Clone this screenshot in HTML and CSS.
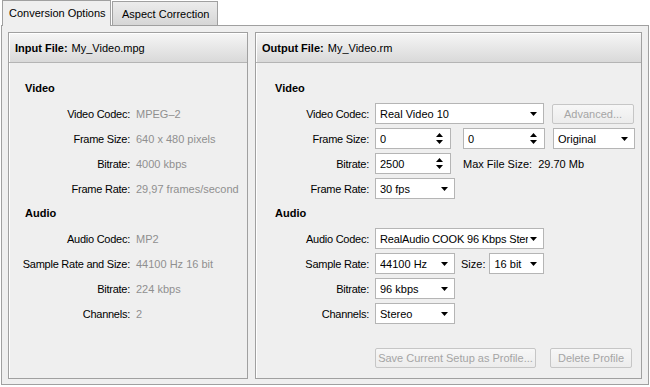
FILE: index.html
```html
<!DOCTYPE html>
<html lang="en">
<head>
    <meta charset="UTF-8">
    <title>Conversion Options</title>
    <link rel="stylesheet" href="styles.css">
</head>
<body>
    <div class="window">
        <div class="tabs">
            <div class="tab tab-active">Conversion Options</div>
            <div class="tab">Aspect Correction</div>
        </div>

        <div class="tab-body">
            <!-- Input file: read-only info -->
            <div class="panel panel-input">
                <div class="panel-header"><b>Input File:</b> My_Video.mpg</div>
                <div class="panel-body">
                    <div class="section-title">Video</div>
                    <div class="row"><span class="label">Video Codec:</span><span class="value">MPEG&#8211;2</span></div>
                    <div class="row"><span class="label">Frame Size:</span><span class="value">640 x 480 pixels</span></div>
                    <div class="row"><span class="label">Bitrate:</span><span class="value">4000 kbps</span></div>
                    <div class="row"><span class="label">Frame Rate:</span><span class="value">29,97 frames/second</span></div>

                    <div class="section-title">Audio</div>
                    <div class="row"><span class="label">Audio Codec:</span><span class="value">MP2</span></div>
                    <div class="row"><span class="label">Sample Rate and Size:</span><span class="value">44100 Hz 16 bit</span></div>
                    <div class="row"><span class="label">Bitrate:</span><span class="value">224 kbps</span></div>
                    <div class="row"><span class="label">Channels:</span><span class="value">2</span></div>
                </div>
            </div>

            <!-- Output file: editable settings -->
            <div class="panel panel-output">
                <div class="panel-header"><b>Output File:</b> My_Video.rm</div>
                <div class="panel-body">
                    <div class="section-title">Video</div>
                    <div class="row">
                        <span class="label">Video Codec:</span>
                        <div class="select w-wide"><span class="select-text">Real Video 10</span><svg class="arrow" width="7" height="4" viewBox="0 0 7 4"><polygon points="0,0 7,0 3.5,4" fill="#000"/></svg></div>
                        <button class="btn w-btn" disabled>Advanced...</button>
                    </div>
                    <div class="row">
                        <span class="label">Frame Size:</span>
                        <div class="spin w-spin"><span class="select-text">0</span><svg class="spin-arrows" width="7" height="11" viewBox="0 0 7 11"><polygon points="3.5,0 7,4 0,4" fill="#000"/><polygon points="0,7 7,7 3.5,11" fill="#000"/></svg></div>
                        <div class="spin w-spin2"><span class="select-text">0</span><svg class="spin-arrows" width="7" height="11" viewBox="0 0 7 11"><polygon points="3.5,0 7,4 0,4" fill="#000"/><polygon points="0,7 7,7 3.5,11" fill="#000"/></svg></div>
                        <div class="select w-btn"><span class="select-text">Original</span><svg class="arrow" width="7" height="4" viewBox="0 0 7 4"><polygon points="0,0 7,0 3.5,4" fill="#000"/></svg></div>
                    </div>
                    <div class="row">
                        <span class="label">Bitrate:</span>
                        <div class="spin w-spin"><span class="select-text">2500</span><svg class="spin-arrows" width="7" height="11" viewBox="0 0 7 11"><polygon points="3.5,0 7,4 0,4" fill="#000"/><polygon points="0,7 7,7 3.5,11" fill="#000"/></svg></div>
                        <span class="note">Max File Size:&nbsp; 29.70 Mb</span>
                    </div>
                    <div class="row">
                        <span class="label">Frame Rate:</span>
                        <div class="select w-small"><span class="select-text">30 fps</span><svg class="arrow" width="7" height="4" viewBox="0 0 7 4"><polygon points="0,0 7,0 3.5,4" fill="#000"/></svg></div>
                    </div>

                    <div class="section-title">Audio</div>
                    <div class="row">
                        <span class="label">Audio Codec:</span>
                        <div class="select w-wide"><span class="select-text select-clip">RealAudio COOK 96 Kbps Stereo</span><svg class="arrow" width="7" height="4" viewBox="0 0 7 4"><polygon points="0,0 7,0 3.5,4" fill="#000"/></svg></div>
                    </div>
                    <div class="row">
                        <span class="label">Sample Rate:</span>
                        <div class="select w-small"><span class="select-text">44100 Hz</span><svg class="arrow" width="7" height="4" viewBox="0 0 7 4"><polygon points="0,0 7,0 3.5,4" fill="#000"/></svg></div>
                        <span class="note note-size">Size:</span>
                        <div class="select w-bits"><span class="select-text">16 bit</span><svg class="arrow" width="7" height="4" viewBox="0 0 7 4"><polygon points="0,0 7,0 3.5,4" fill="#000"/></svg></div>
                    </div>
                    <div class="row">
                        <span class="label">Bitrate:</span>
                        <div class="select w-small"><span class="select-text">96 kbps</span><svg class="arrow" width="7" height="4" viewBox="0 0 7 4"><polygon points="0,0 7,0 3.5,4" fill="#000"/></svg></div>
                    </div>
                    <div class="row">
                        <span class="label">Channels:</span>
                        <div class="select w-small"><span class="select-text">Stereo</span><svg class="arrow" width="7" height="4" viewBox="0 0 7 4"><polygon points="0,0 7,0 3.5,4" fill="#000"/></svg></div>
                    </div>

                    <div class="profile-buttons">
                        <button class="btn w-save" disabled>Save Current Setup as Profile...</button>
                        <button class="btn w-btn" disabled>Delete Profile</button>
                    </div>
                </div>
            </div>
        </div>
    </div>
</body>
</html>
```

FILE: styles.css
```css
:root {
    --face: #efefef;
    --frame: #a0a0a0;
    --field-border: #b5b5b5;
    --muted: #8f8f8f;
    --disabled: #a5a5a5;
}

* {
    box-sizing: border-box;
    margin: 0;
    padding: 0;
}

body {
    font-family: "Liberation Sans", Arial, sans-serif;
    font-size: 11px;
    color: #000;
    background-color: #fff;
}

.window {
    width: 650px;
    height: 387px;
    padding: 0 1px;
}

/* Tabs */

.tabs {
    display: flex;
    align-items: flex-end;
    height: 25px;
}

.tab {
    height: 24px;
    width: 106px;
    margin-left: 1px;
    padding-left: 9px;
    display: flex;
    align-items: center;
    border: 1px solid var(--frame);
    border-bottom: none;
    background: linear-gradient(#ececec, #d6d6d6);
}

.tab-active {
    position: relative;
    z-index: 1;
    height: 26px;
    width: 109px;
    margin-bottom: -1px;
    padding-left: 6px;
    padding-bottom: 1px;
    background: var(--face);
}

.tab-body {
    height: 360px;
    display: flex;
    gap: 7px;
    padding: 6px 6px 5px 6px;
    border: 1px solid var(--frame);
    background-color: var(--face);
}

/* Panels */

.panel {
    display: flex;
    flex-direction: column;
    border: 1px solid var(--frame);
    box-shadow: inset 1px 1px 0 #fff;
}

.panel-input {
    width: 240px;
}

.panel-output {
    width: 387px;
}

.panel-header {
    height: 30px;
    display: flex;
    align-items: center;
    gap: 4px;
    padding-left: 6px;
    border-bottom: 1px solid #b4b4b4;
    background: linear-gradient(#f6f6f6, #d9d9d9);
    box-shadow: inset 1px 1px 0 #fff;
}

.panel-body {
    flex: 1;
    display: flex;
    flex-direction: column;
    padding: 15px 0 10px 16px;
}

.panel-output .panel-body {
    padding-left: 19px;
}

.section-title {
    height: 20px;
    line-height: 20px;
    margin-bottom: 5px;
    font-weight: bold;
}

.row {
    height: 21px;
    margin-bottom: 4px;
    display: flex;
    align-items: center;
    gap: 6px;
}

/* labels sit right-aligned; long ones grow to the left */
.label {
    width: 105px;
    flex-shrink: 0;
    display: flex;
    justify-content: flex-end;
    white-space: nowrap;
    letter-spacing: -0.25px;
}

.panel-output .label {
    width: 94px;
}

.value {
    color: var(--muted);
    white-space: nowrap;
}

.note {
    margin-left: 6px;
    white-space: nowrap;
}

.note-size {
    margin-left: 0;
    margin-right: -2px;
}

/* Fields */

.select,
.spin {
    height: 21px;
    display: flex;
    align-items: center;
    padding: 0 6px 0 4px;
    border: 1px solid var(--field-border);
    background-color: #fff;
}

.select-text {
    flex: 1;
    overflow: hidden;
    white-space: nowrap;
}

.select-clip {
    letter-spacing: -0.15px;
}

.arrow,
.spin-arrows {
    flex-shrink: 0;
    margin-left: 2px;
}

.spin {
    padding-right: 7px;
}

.w-wide { width: 169px; }
.w-small { width: 80px; }
.w-spin { width: 76px; }
.w-spin2 { width: 82px; margin-left: 6px; }
.w-btn { width: 82px; margin-left: 2px; }
.w-bits { width: 55px; }
.w-save { width: 161px; }

.btn {
    height: 20px;
    font-family: inherit;
    font-size: 11px;
    color: var(--disabled);
    border: 1px solid #c6c6c6;
    border-radius: 2px;
    background: linear-gradient(#f7f7f7, #ececec);
}

.profile-buttons {
    margin-top: auto;
    margin-left: 100px;
    display: flex;
    gap: 14px;
}

.profile-buttons .w-btn {
    margin-left: 0;
}
```
